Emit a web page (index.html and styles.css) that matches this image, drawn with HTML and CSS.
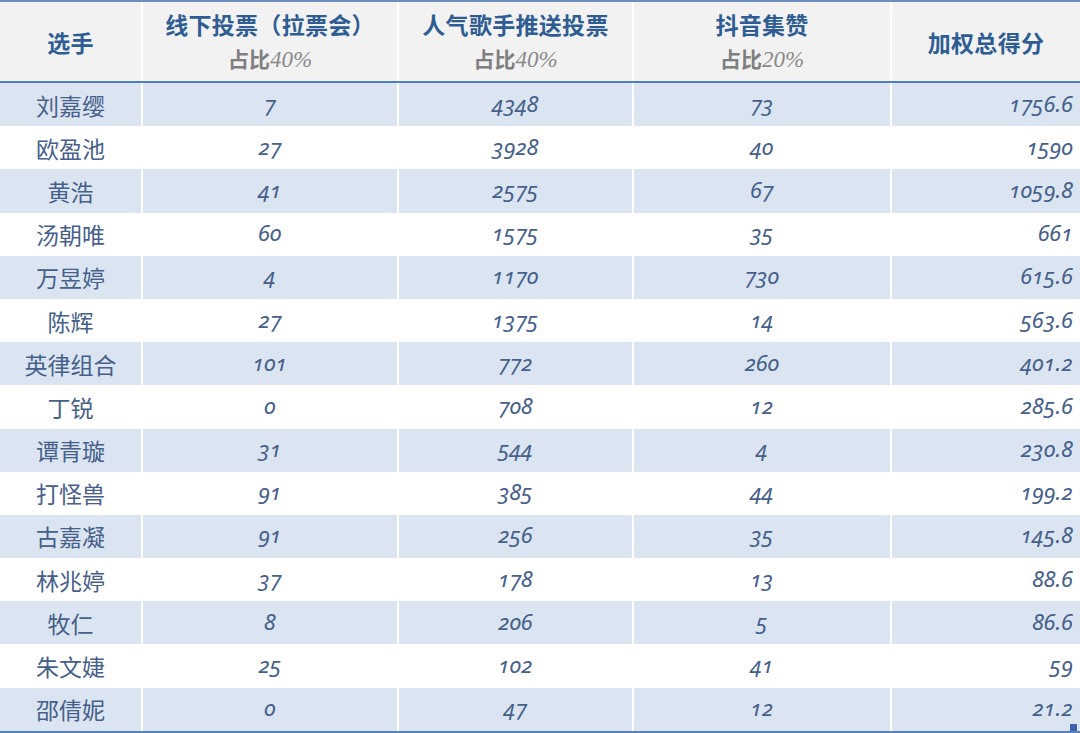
FILE: index.html
```html
<!DOCTYPE html>
<html lang="zh">
<head>
<meta charset="utf-8">
<link rel="stylesheet" href="styles.css">
</head>
<body>
<div class="sheet">
  <div class="grid head">
    <div class="h"><span class="t">选手</span></div>
    <div class="h"><span class="t">线下投票（拉票会）</span><span class="s">占比<i>40%</i></span></div>
    <div class="h"><span class="t">人气歌手推送投票</span><span class="s">占比<i>40%</i></span></div>
    <div class="h"><span class="t">抖音集赞</span><span class="s">占比<i>20%</i></span></div>
    <div class="h"><span class="t">加权总得分</span></div>
  </div>
  <div class="body">
    <div class="grid row b"><div class="n">刘嘉缨</div><div class="v">7</div><div class="v">4348</div><div class="v">73</div><div class="r">1756.6</div></div>
    <div class="grid row"><div class="n">欧盈池</div><div class="v">27</div><div class="v">3928</div><div class="v">40</div><div class="r">1590</div></div>
    <div class="grid row b"><div class="n">黄浩</div><div class="v">41</div><div class="v">2575</div><div class="v">67</div><div class="r">1059.8</div></div>
    <div class="grid row"><div class="n">汤朝唯</div><div class="v">60</div><div class="v">1575</div><div class="v">35</div><div class="r">661</div></div>
    <div class="grid row b"><div class="n">万昱婷</div><div class="v">4</div><div class="v">1170</div><div class="v">730</div><div class="r">615.6</div></div>
    <div class="grid row"><div class="n">陈辉</div><div class="v">27</div><div class="v">1375</div><div class="v">14</div><div class="r">563.6</div></div>
    <div class="grid row b"><div class="n">英律组合</div><div class="v">101</div><div class="v">772</div><div class="v">260</div><div class="r">401.2</div></div>
    <div class="grid row"><div class="n">丁锐</div><div class="v">0</div><div class="v">708</div><div class="v">12</div><div class="r">285.6</div></div>
    <div class="grid row b"><div class="n">谭青璇</div><div class="v">31</div><div class="v">544</div><div class="v">4</div><div class="r">230.8</div></div>
    <div class="grid row"><div class="n">打怪兽</div><div class="v">91</div><div class="v">385</div><div class="v">44</div><div class="r">199.2</div></div>
    <div class="grid row b"><div class="n">古嘉凝</div><div class="v">91</div><div class="v">256</div><div class="v">35</div><div class="r">145.8</div></div>
    <div class="grid row"><div class="n">林兆婷</div><div class="v">37</div><div class="v">178</div><div class="v">13</div><div class="r">88.6</div></div>
    <div class="grid row b"><div class="n">牧仁</div><div class="v">8</div><div class="v">206</div><div class="v">5</div><div class="r">86.6</div></div>
    <div class="grid row"><div class="n">朱文婕</div><div class="v">25</div><div class="v">102</div><div class="v">41</div><div class="r">59</div></div>
    <div class="grid row b"><div class="n">邵倩妮</div><div class="v">0</div><div class="v">47</div><div class="v">12</div><div class="r">21.2</div></div>
    <span class="handle"></span>
  </div>
</div>
</body>
</html>
```
FILE: styles.css
```css
html, body { margin: 0; padding: 0; background: #ffffff; }
.sheet {
  width: 1080px;
  height: 733px;
  border-top: 2px solid #6f90c4;
  box-sizing: border-box;
  overflow: hidden;
  font-family: "Noto Sans CJK SC", sans-serif;
}
.grid {
  display: grid;
  grid-template-columns: 141px 254px 233px 256px 1fr;
  column-gap: 2px;
  background: #ffffff;
}
.head {
  height: 79px;
  border-bottom: 2px solid #4f7fbb;
}
.h {
  background: #f2f2f2;
  display: flex;
  flex-direction: column;
  align-items: center;
  justify-content: center;
  line-height: 34px;
}
.t {
  font-weight: 700;
  font-size: 23px;
  color: #2f5d93;
  letter-spacing: 0.3px;
}
.s {
  font-weight: 700;
  font-size: 21px;
  color: #7f7f7f;
}
.s i {
  font-family: "Liberation Serif", serif;
  font-style: italic;
  font-weight: 400;
  font-size: 23px;
  color: #8a8a8a;
}
.body {
  position: relative;
  border-bottom: 2px solid #5a82ba;
}
.row { height: 43.2px; }
.row > div {
  display: flex;
  align-items: center;
  background: #ffffff;
  color: #46608a;
}
.row.b > div { background: #dbe5f1; }
.n {
  justify-content: center;
  font-size: 23px;
  color: #3c5a86;
}
.v, .r {
  font-family: "Noto Sans", sans-serif;
  font-style: italic;
  font-variant-numeric: oldstyle-nums;
  font-size: 22px;
  color: #4a5f83;
  letter-spacing: 0.3px;
  padding-bottom: 4px;
  box-sizing: border-box;
}
.v { justify-content: center; }
.r { justify-content: flex-end; padding-right: 7px; }
.handle {
  position: absolute;
  right: 3px;
  bottom: 0;
  width: 7px;
  height: 7px;
  background: #3f63b0;
}
```
